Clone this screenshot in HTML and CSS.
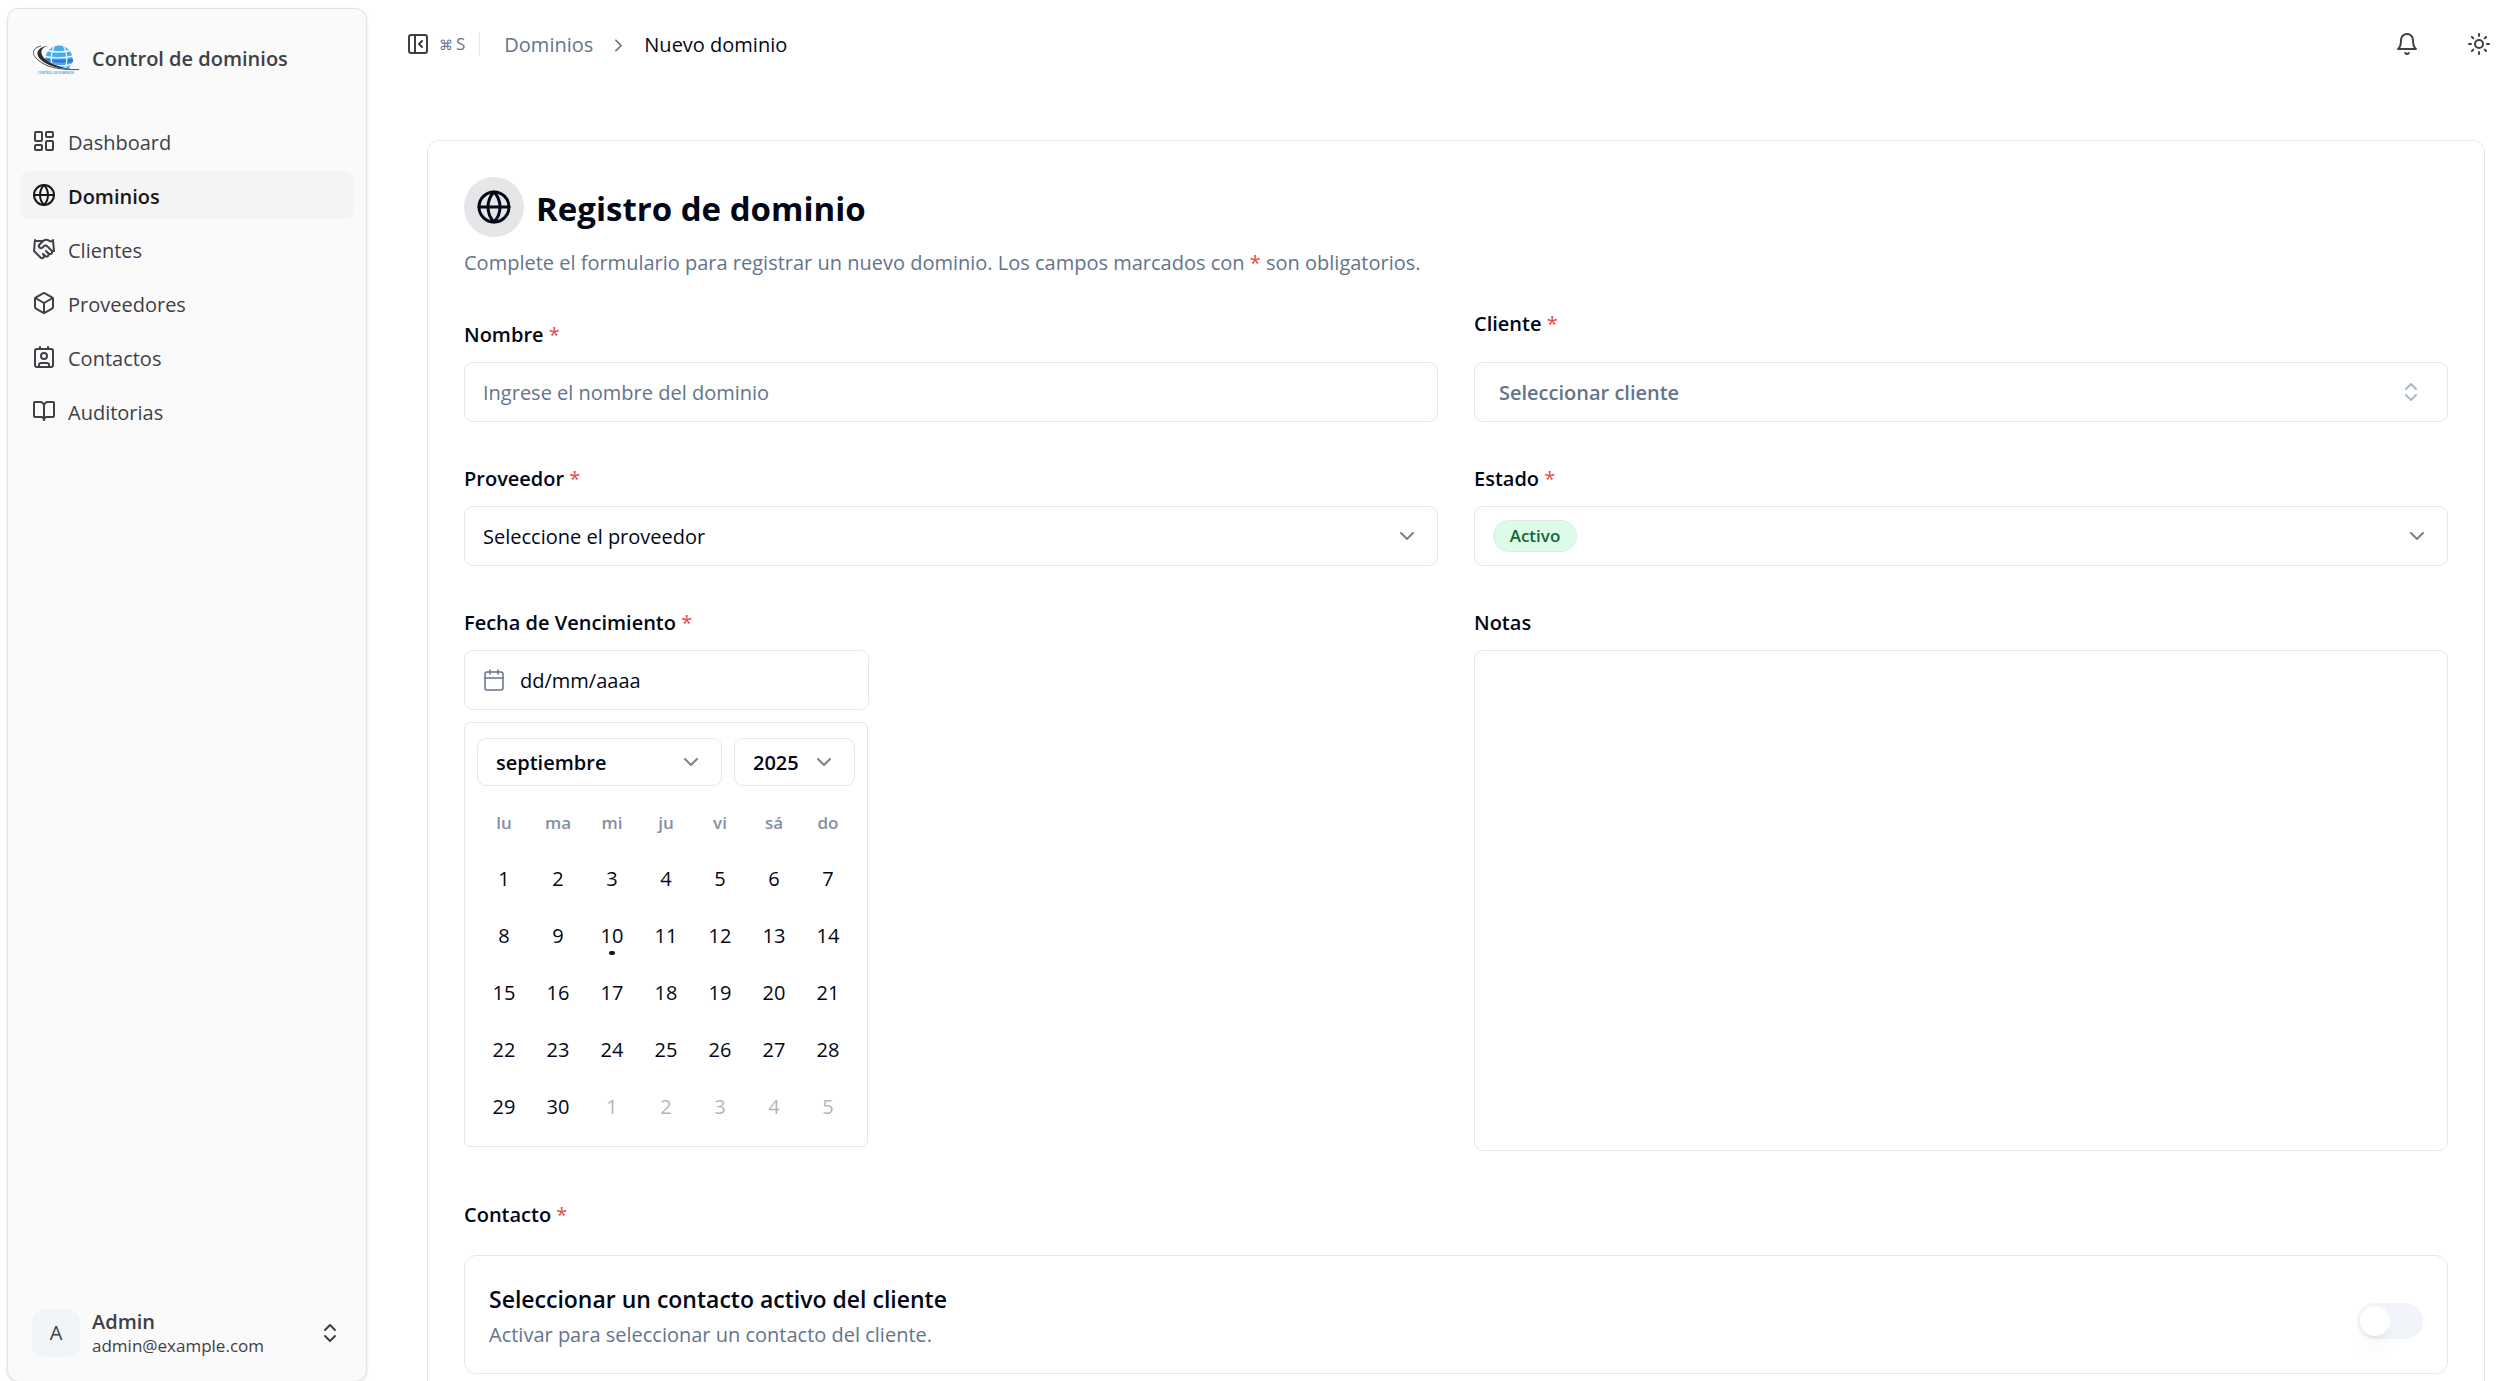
FILE: index.html
```html
<!DOCTYPE html>
<html lang="es">
<head>
<meta charset="utf-8">
<meta name="viewport" content="width=device-width, initial-scale=1">
<title>Nuevo dominio</title>
<link rel="stylesheet" href="styles.css">
</head>
<body>
<svg class="sprite" aria-hidden="true">
  <symbol id="i-globe" viewBox="0 0 24 24"><circle cx="12" cy="12" r="10"/><path d="M12 2a14.5 14.5 0 0 0 0 20 14.5 14.5 0 0 0 0-20"/><path d="M2 12h20"/></symbol>
  <symbol id="i-dashboard" viewBox="0 0 24 24"><rect width="7" height="9" x="3" y="3" rx="1"/><rect width="7" height="5" x="14" y="3" rx="1"/><rect width="7" height="9" x="14" y="12" rx="1"/><rect width="7" height="5" x="3" y="16" rx="1"/></symbol>
  <symbol id="i-handshake" viewBox="0 0 24 24"><path d="m11 17 2 2a1 1 0 1 0 3-3"/><path d="m14 14 2.5 2.5a1 1 0 1 0 3-3l-3.88-3.88a3 3 0 0 0-4.24 0l-.88.88a1 1 0 1 1-3-3l2.81-2.81a5.79 5.79 0 0 1 7.06-.87l.47.28a2 2 0 0 0 1.42.25L21 4"/><path d="m21 3 1 11h-2"/><path d="M3 3 2 14l6.5 6.5a1 1 0 1 0 3-3"/><path d="M3 4h8"/></symbol>
  <symbol id="i-box" viewBox="0 0 24 24"><path d="M21 8a2 2 0 0 0-1-1.73l-7-4a2 2 0 0 0-2 0l-7 4A2 2 0 0 0 3 8v8a2 2 0 0 0 1 1.73l7 4a2 2 0 0 0 2 0l7-4A2 2 0 0 0 21 16Z"/><path d="m3.3 7 8.7 5 8.7-5"/><path d="M12 22V12"/></symbol>
  <symbol id="i-contact" viewBox="0 0 24 24"><path d="M16 2v2"/><path d="M7 22v-2a2 2 0 0 1 2-2h6a2 2 0 0 1 2 2v2"/><path d="M8 2v2"/><circle cx="12" cy="11" r="3"/><rect x="3" y="4" width="18" height="18" rx="2"/></symbol>
  <symbol id="i-book" viewBox="0 0 24 24"><path d="M12 7v14"/><path d="M3 18a1 1 0 0 1-1-1V4a1 1 0 0 1 1-1h5a4 4 0 0 1 4 4 4 4 0 0 1 4-4h5a1 1 0 0 1 1 1v13a1 1 0 0 1-1 1h-6a3 3 0 0 0-3 3 3 3 0 0 0-3-3z"/></symbol>
  <symbol id="i-updown" viewBox="0 0 24 24"><path d="m7 15 5 5 5-5"/><path d="m7 9 5-5 5 5"/></symbol>
  <symbol id="i-down" viewBox="0 0 24 24"><path d="m6 9 6 6 6-6"/></symbol>
  <symbol id="i-right" viewBox="0 0 24 24"><path d="m9 18 6-6-6-6"/></symbol>
  <symbol id="i-panel" viewBox="0 0 24 24"><rect width="18" height="18" x="3" y="3" rx="2"/><path d="M9 3v18"/><path d="m16 15-3-3 3-3"/></symbol>
  <symbol id="i-bell" viewBox="0 0 24 24"><path d="M10.3 21a1.94 1.94 0 0 0 3.4 0"/><path d="M6 8a6 6 0 0 1 12 0c0 7 3 9 3 9H3s3-2 3-9"/></symbol>
  <symbol id="i-sun" viewBox="0 0 24 24"><circle cx="12" cy="12" r="4"/><path d="M12 2v2"/><path d="M12 20v2"/><path d="m4.93 4.93 1.41 1.41"/><path d="m17.66 17.66 1.41 1.41"/><path d="M2 12h2"/><path d="M20 12h2"/><path d="m6.34 17.66-1.41 1.41"/><path d="m19.07 4.93-1.41 1.41"/></symbol>
  <symbol id="i-calendar" viewBox="0 0 24 24"><path d="M8 2v4"/><path d="M16 2v4"/><rect width="18" height="18" x="3" y="4" rx="2"/><path d="M3 10h18"/></symbol>
</svg>

<div class="app">
  <aside class="sidebar">
    <div class="brand">
      <svg class="logo" viewBox="0 0 48 48" aria-hidden="true">
        <defs><clipPath id="globe-clip"><path d="M12 6H44V34Q24 32 12 24Z"/></clipPath></defs>
        <g clip-path="url(#globe-clip)">
          <circle cx="27" cy="23" r="13.5" fill="#4aaaf0"/>
          <path d="M13 22q7 3 28 1v3q-14 2-26-1z" fill="#2f78d8"/>
          <g fill="none" stroke="#eef6fd" stroke-width="1.3">
            <path d="M13 20.500q14 3 28-.5M15.500 14.500q11 3 23 0M16 27.500q11 4 24 1"/>
            <path d="M23 9q-7 12-1 27M31 9q7 12 1 27"/>
          </g>
        </g>
        <path d="M18 9.500C9.500 10 7 16 12 22c7 6.500 18 10 34 11.300C27 35 12 30 5 23-3 14 5 8.500 18 9.500Z" fill="#fafafa"/>
        <path d="M17 9.700C8 11 8 17 12 22c7 6.500 17 10 30.500 11.300C27 33.500 14 29.500 8 23 2.500 17 6 10.500 17 9.700Z" fill="#2c2c30"/>
        <path d="M9 10C0 12-1 18 6 24c8 7 20 10 41 9.600" fill="none" stroke="#3a3a3e" stroke-width=".9"/>
        <text class="logo-text" x="24" y="38" text-anchor="middle">CONTROL DE DOMINIOS</text>
      </svg>
      <span class="brand-name">Control de dominios</span>
    </div>
    <nav class="nav" aria-label="Principal">
      <a class="nav-link" href="#"><svg class="icon"><use href="#i-dashboard"/></svg><span class="nav-text">Dashboard</span></a>
      <a class="nav-link nav-link--active" href="#" aria-current="page"><svg class="icon"><use href="#i-globe"/></svg><span class="nav-text">Dominios</span></a>
      <a class="nav-link" href="#"><svg class="icon"><use href="#i-handshake"/></svg><span class="nav-text">Clientes</span></a>
      <a class="nav-link" href="#"><svg class="icon"><use href="#i-box"/></svg><span class="nav-text">Proveedores</span></a>
      <a class="nav-link" href="#"><svg class="icon"><use href="#i-contact"/></svg><span class="nav-text">Contactos</span></a>
      <a class="nav-link" href="#"><svg class="icon"><use href="#i-book"/></svg><span class="nav-text">Auditorias</span></a>
    </nav>
    <button class="account" type="button">
      <span class="avatar">A</span>
      <span class="account-info"><span class="account-name">Admin</span><span class="account-mail">admin@example.com</span></span>
      <svg class="icon"><use href="#i-updown"/></svg>
    </button>
  </aside>

  <div class="content">
    <header class="topbar">
      <button class="toggle" type="button" aria-label="Contraer menú"><svg class="icon"><use href="#i-panel"/></svg><kbd class="keys"><span class="keys-cmd">⌘</span>S</kbd></button>
      <nav class="crumbs" aria-label="Ruta">
        <a class="crumb" href="#">Dominios</a>
        <svg class="icon icon--small"><use href="#i-right"/></svg>
        <span class="crumb-current" aria-current="page">Nuevo dominio</span>
      </nav>
      <div class="actions">
        <button class="icon-button" type="button" aria-label="Notificaciones"><svg class="icon"><use href="#i-bell"/></svg></button>
        <button class="icon-button" type="button" aria-label="Cambiar tema"><svg class="icon"><use href="#i-sun"/></svg></button>
      </div>
    </header>

    <main class="card">
      <div class="card-head">
        <span class="badge-icon"><svg class="icon icon--large"><use href="#i-globe"/></svg></span>
        <h1 class="title">Registro de dominio</h1>
      </div>
      <p class="lead">Complete el formulario para registrar un nuevo dominio. Los campos marcados con <span class="req">*</span> son obligatorios.</p>

      <form class="form">
        <div class="field">
          <label class="label" for="nombre">Nombre <span class="req">*</span></label>
          <input class="control control--text" id="nombre" type="text" placeholder="Ingrese el nombre del dominio">
        </div>
        <div class="field field--roomy">
          <label class="label" for="cliente">Cliente <span class="req">*</span></label>
          <div class="select select--client">
            <select class="control control--client" id="cliente"><option>Seleccionar cliente</option></select>
            <svg class="icon"><use href="#i-updown"/></svg>
          </div>
        </div>
        <div class="field">
          <label class="label" for="proveedor">Proveedor <span class="req">*</span></label>
          <div class="select">
            <select class="control" id="proveedor"><option>Seleccione el proveedor</option></select>
            <svg class="icon"><use href="#i-down"/></svg>
          </div>
        </div>
        <div class="field">
          <label class="label" for="estado">Estado <span class="req">*</span></label>
          <div class="select control control--status">
            <select class="status" id="estado"><option>Activo</option></select>
            <svg class="icon"><use href="#i-down"/></svg>
          </div>
        </div>
        <div class="field field--top">
          <label class="label" for="fecha">Fecha de Vencimiento <span class="req">*</span></label>
          <div class="date">
            <div class="control control--date">
              <svg class="icon"><use href="#i-calendar"/></svg>
              <input class="date-input" id="fecha" type="text" placeholder="dd/mm/aaaa">
            </div>
            <div class="calendar">
              <div class="calendar-head">
                <div class="select select--month">
                  <select class="control control--short" aria-label="Mes"><option>septiembre</option></select>
                  <svg class="icon"><use href="#i-down"/></svg>
                </div>
                <div class="select select--year">
                  <select class="control control--short" aria-label="Año"><option>2025</option></select>
                  <svg class="icon"><use href="#i-down"/></svg>
                </div>
              </div>
              <table class="days">
                <thead><tr><th>lu</th><th>ma</th><th>mi</th><th>ju</th><th>vi</th><th>sá</th><th>do</th></tr></thead>
                <tbody>
                  <tr><td><button class="day" type="button">1</button></td><td><button class="day" type="button">2</button></td><td><button class="day" type="button">3</button></td><td><button class="day" type="button">4</button></td><td><button class="day" type="button">5</button></td><td><button class="day" type="button">6</button></td><td><button class="day" type="button">7</button></td></tr>
                  <tr><td><button class="day" type="button">8</button></td><td><button class="day" type="button">9</button></td><td><button class="day day--today" type="button">10</button></td><td><button class="day" type="button">11</button></td><td><button class="day" type="button">12</button></td><td><button class="day" type="button">13</button></td><td><button class="day" type="button">14</button></td></tr>
                  <tr><td><button class="day" type="button">15</button></td><td><button class="day" type="button">16</button></td><td><button class="day" type="button">17</button></td><td><button class="day" type="button">18</button></td><td><button class="day" type="button">19</button></td><td><button class="day" type="button">20</button></td><td><button class="day" type="button">21</button></td></tr>
                  <tr><td><button class="day" type="button">22</button></td><td><button class="day" type="button">23</button></td><td><button class="day" type="button">24</button></td><td><button class="day" type="button">25</button></td><td><button class="day" type="button">26</button></td><td><button class="day" type="button">27</button></td><td><button class="day" type="button">28</button></td></tr>
                  <tr><td><button class="day" type="button">29</button></td><td><button class="day" type="button">30</button></td><td><button class="day day--out" type="button">1</button></td><td><button class="day day--out" type="button">2</button></td><td><button class="day day--out" type="button">3</button></td><td><button class="day day--out" type="button">4</button></td><td><button class="day day--out" type="button">5</button></td></tr>
                </tbody>
              </table>
            </div>
          </div>
        </div>
        <div class="field field--top">
          <label class="label" for="notas">Notas</label>
          <textarea class="control control--notes" id="notas"></textarea>
        </div>
        <section class="contact">
          <h2 class="label">Contacto <span class="req">*</span></h2>
          <div class="option">
            <div class="option-text">
              <label class="option-title" for="contacto">Seleccionar un contacto activo del cliente</label>
              <p class="option-note">Activar para seleccionar un contacto del cliente.</p>
            </div>
            <input class="switch" id="contacto" type="checkbox" role="switch">
          </div>
        </section>
      </form>
    </main>
  </div>
</div>
</body>
</html>
```

FILE: styles.css
```css
:root {
  --ink: #020817;
  --muted: #64748b;
  --line: #e2e8f0;
  --side: #3f3f46;
}

*, *::before, *::after { box-sizing: border-box; }

body {
  margin: 0;
  background: #fff;
  color: var(--ink);
  font: 400 20px/30px "Segoe UI", "Open Sans", "Noto Sans", sans-serif;
}

h1, h2, p { margin: 0; }
a { color: inherit; text-decoration: none; }
button, input, select, textarea { margin: 0; font: inherit; color: inherit; }
button { padding: 0; border: 0; background: none; cursor: pointer; }

.sprite { display: none; }

.icon {
  flex: none;
  width: 24px;
  height: 24px;
  fill: none;
  stroke: currentColor;
  stroke-width: 2;
  stroke-linecap: round;
  stroke-linejoin: round;
}
.icon--small { width: 21px; height: 21px; }
.icon--large { width: 36px; height: 36px; }

.app {
  display: flex;
  height: 100vh;
  overflow: hidden;
}

/* Sidebar */
.sidebar {
  flex: none;
  display: flex;
  flex-direction: column;
  width: 360px;
  height: calc(100vh - 7px);
  margin: 8px 0 0 7px;
  padding: 15px 12px 12px;
  border: 1px solid #e4e4e7;
  border-radius: 12px;
  background: #fafafa;
  color: var(--side);
  box-shadow: 0 1px 3px rgb(0 0 0 / 12%);
}
.brand {
  display: flex;
  align-items: center;
  gap: 12px;
  height: 72px;
  padding: 0 12px;
}
.logo { flex: none; width: 48px; height: 48px; }
.logo-text { fill: #4aaaf0; font-size: 3px; font-weight: 700; }
.brand-name { padding-bottom: 2px; font-weight: 600; }
.nav {
  display: flex;
  flex-direction: column;
  gap: 6px;
  margin-top: 21px;
}
.nav-link {
  display: flex;
  align-items: center;
  gap: 12px;
  height: 48px;
  padding: 0 12px;
  border-radius: 9px;
}
.nav-text { padding-top: 3px; }
.nav-link--active { background: #f4f4f5; color: #18181b; font-weight: 600; }
.account {
  display: flex;
  align-items: center;
  gap: 12px;
  height: 72px;
  margin-top: auto;
  padding: 0 12px;
  text-align: left;
}
.avatar {
  display: grid;
  place-items: center;
  width: 48px;
  height: 48px;
  border-radius: 12px;
  background: #f1f5f9;
}
.account-info { display: flex; flex: 1; flex-direction: column; padding-top: 2px; line-height: 24px; }
.account-name { font-weight: 600; }
.account-mail { font-size: 17px; }

/* Top bar */
.content { flex: 1; min-width: 0; padding-right: 11px; }
.topbar { display: flex; align-items: center; height: 88px; padding-left: 39px; }
.toggle {
  display: flex;
  align-items: center;
  gap: 9px;
  height: 24px;
  padding-right: 14px;
  border-right: 1px solid var(--line);
  color: var(--side);
}
.keys { color: var(--muted); font: 400 17px/24px "Segoe UI", "Open Sans", sans-serif; }
.keys-cmd { margin-right: 3px; font-size: 14px; }
.crumbs { display: flex; align-items: center; gap: 15px; margin-left: 24px; padding-top: 2px; color: var(--muted); }
.crumb-current { color: var(--ink); }
.actions { display: flex; gap: 24px; margin-left: auto; color: var(--side); }
.icon-button { display: grid; place-items: center; width: 48px; height: 48px; }

/* Card */
.card {
  margin: 52px 18px 0 60px;
  padding: 36px;
  border: 1px solid var(--line);
  border-radius: 12px;
}
.card-head { display: flex; align-items: center; gap: 12px; }
.badge-icon {
  display: grid;
  place-items: center;
  width: 60px;
  height: 60px;
  border-radius: 50%;
  background: #e6e6e8;
}
.title { padding-top: 4px; font-size: 33px; line-height: 48px; font-weight: 700; }
.lead { margin-top: 11px; color: var(--muted); }
.req { color: #ef4444; font-weight: 400; }

/* Form */
.form {
  display: grid;
  grid-template-columns: 1fr 1fr;
  align-items: end;
  gap: 42px 36px;
  margin-top: 31px;
}
.field { display: flex; flex-direction: column; gap: 12px; min-width: 0; }
.field--roomy { gap: 23px; }
.field--top { align-self: stretch; }
.label { font-size: 20px; line-height: 30px; font-weight: 600; }
.control {
  width: 100%;
  height: 60px;
  padding: 2px 18px 0;
  border: 1px solid var(--line);
  border-radius: 9px;
  background: #fff;
  appearance: none;
}
.control::placeholder { color: var(--muted); opacity: 1; }
.control--text { padding-top: 0; }
.control--client { padding: 2px 24px 0; color: var(--muted); font-weight: 600; }
.control--notes { flex: 1; padding: 12px 18px; resize: none; }
.control--short { height: 48px; font-weight: 600; }

.select { display: grid; align-items: center; }
.select > * { grid-area: 1 / 1; }
.select .icon { justify-self: end; margin-right: 19px; opacity: .5; pointer-events: none; }
.select--client .icon { margin-right: 25px; color: var(--muted); }
.control--status { padding-top: 0; }
.control--status .icon { margin-right: 0; }
.status {
  width: 84px;
  height: 32px;
  padding: 0;
  border: 1px solid var(--line);
  border-radius: 16px;
  background: #dcfce7;
  color: #166534;
  font-size: 17px;
  font-weight: 600;
  text-align: center;
  text-align-last: center;
  appearance: none;
}

.date { display: flex; flex-direction: column; align-items: flex-start; gap: 12px; padding-bottom: 4px; }
.control--date { display: flex; align-items: center; gap: 14px; width: 405px; padding: 0 17px; }
.control--date .icon { color: var(--muted); stroke-width: 1.5; }
.date-input { flex: 1; min-width: 0; padding: 2px 0 0; border: 0; background: none; }
.date-input::placeholder { color: var(--ink); opacity: 1; }
.calendar { width: 404px; padding: 15px 12px 13px; border: 1px solid var(--line); border-radius: 6px; }
.calendar-head { display: flex; gap: 12px; }
.select--month { flex: 1; }
.select--year { width: 121px; }
.days { width: 100%; margin-top: 12px; border-collapse: collapse; table-layout: fixed; }
.days th { height: 50px; padding: 0; color: #8490a2; font-size: 17px; font-weight: 600; }
.days td { height: 57px; padding: 3px 0 0; }
.day { position: relative; display: block; width: 100%; height: 54px; padding-top: 2px; }
.day--out { opacity: .3; }
.day--today::after {
  content: "";
  position: absolute;
  bottom: 7px;
  left: 50%;
  width: 6px;
  height: 4px;
  margin-left: -3px;
  border-radius: 2px;
  background: #0f172a;
}

.contact { display: flex; flex-direction: column; grid-column: 1 / -1; gap: 25px; margin-top: 7px; }
.option {
  display: flex;
  align-items: center;
  justify-content: space-between;
  padding: 25px 24px 22px;
  border: 1px solid var(--line);
  border-radius: 12px;
}
.option-title { display: block; font-size: 23px; line-height: 36px; font-weight: 600; }
.option-note { padding-top: 2px; line-height: 32px; color: var(--muted); }
.switch {
  display: flex;
  align-items: center;
  width: 66px;
  height: 36px;
  margin: 9px 0 0;
  padding: 3px;
  border-radius: 18px;
  background: #f1f5f9;
  appearance: none;
}
.switch::before {
  content: "";
  width: 30px;
  height: 30px;
  border-radius: 50%;
  background: #fff;
  box-shadow: 0 15px 22px -4px rgb(0 0 0 / 5%), 0 6px 9px -6px rgb(0 0 0 / 10%);
}
.switch:checked { background: #0f172a; }
.switch:checked::before { margin-left: 30px; }
```
